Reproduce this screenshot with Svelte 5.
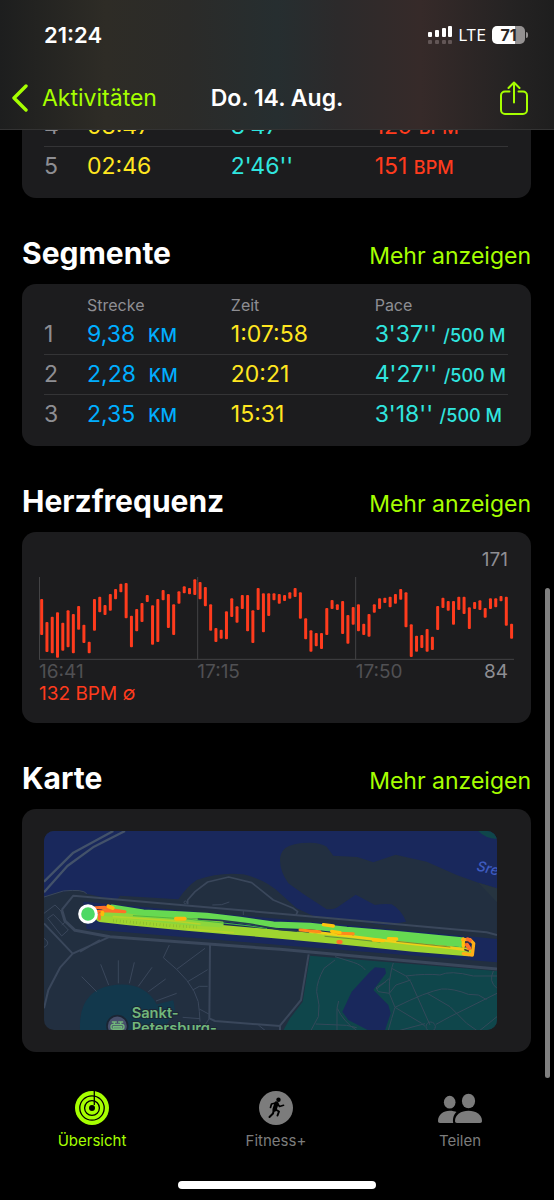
<script>
    const splits = [
        { nr: 4, time: '03:47', pace: "3'47''", bpm: 129 },
        { nr: 5, time: '02:46', pace: "2'46''", bpm: 151 }
    ];

    const segments = [
        { nr: 1, distance: '9,38', time: '1:07:58', pace: "3'37''" },
        { nr: 2, distance: '2,28', time: '20:21', pace: "4'27''" },
        { nr: 3, distance: '2,35', time: '15:31', pace: "3'18''" }
    ];

    // top and bottom of every bar, in chart units
    const heartRate = [
        [207, 315], [276, 366], [260, 370], [247, 383], [278, 362], [241, 352],
        [252, 370], [228, 299], [284, 339], [335, 370], [207, 302], [200, 247],
        [225, 255], [192, 242], [177, 208], [161, 187], [159, 265], [257, 352],
        [237, 304], [219, 276], [195, 216], [226, 344], [207, 336], [180, 211],
        [192, 294], [223, 315], [184, 221], [169, 190], [174, 193], [148, 195],
        [156, 208], [171, 229], [223, 302], [294, 336], [299, 326], [244, 328],
        [205, 261], [229, 278], [195, 237], [195, 304], [241, 339], [174, 240],
        [190, 307], [190, 258], [190, 211], [192, 221], [195, 213], [187, 206],
        [174, 201], [187, 266], [265, 328], [301, 365], [309, 349], [309, 357],
        [234, 315], [210, 237], [223, 240], [213, 312], [255, 341], [231, 284],
        [223, 304], [281, 315], [252, 320], [223, 248], [205, 237], [203, 219],
        [200, 232], [192, 221], [177, 209], [187, 292], [283, 381], [317, 365],
        [315, 354], [297, 365], [320, 360], [228, 300], [203, 234], [213, 242],
        [213, 284], [200, 240], [200, 252], [232, 297], [216, 237], [211, 240],
        [234, 263], [205, 237], [205, 232], [198, 214], [200, 287], [281, 326]
    ];
</script>

<div class="app">
    <header>
        <div class="status">
            <span class="clock">21:24</span>
            <div class="status-right">
                <svg class="signal" viewBox="0 0 25 18" aria-hidden="true">
                    <g fill="#fff">
                        <rect x="0" y="6" width="4" height="5" rx="1" />
                        <rect x="7" y="4" width="4" height="7" rx="1" />
                        <rect x="14" y="2" width="4" height="9" rx="1" />
                        <rect x="20" y="0" width="4" height="11" rx="1" />
                    </g>
                    <g fill="#625656">
                        <rect x="0" y="14" width="4" height="4" rx="1" />
                        <rect x="7" y="14" width="4" height="4" rx="1" />
                        <rect x="14" y="14" width="4" height="4" rx="1" />
                        <rect x="20" y="14" width="4" height="4" rx="1" />
                    </g>
                </svg>
                <span class="network">LTE</span>
                <div class="battery"><span>71</span></div>
            </div>
        </div>
        <nav class="navbar">
            <button class="back">
                <svg viewBox="0 0 16 28" aria-hidden="true">
                    <path d="M14 2 2 14l12 12" fill="none" stroke="currentColor" stroke-width="3.4" stroke-linecap="round" stroke-linejoin="round" />
                </svg>
                Aktivitäten
            </button>
            <h1>Do. 14. Aug.</h1>
            <button class="share" aria-label="Teilen">
                <svg viewBox="0 0 28 35" aria-hidden="true">
                    <path d="M9.500 10.500H5a4 4 0 0 0-4 4V29a4 4 0 0 0 4 4h18a4 4 0 0 0 4-4V14.500a4 4 0 0 0-4-4h-4.500M14 21.500V1.500M8.500 7 14 1.500 19.500 7" fill="none" stroke="currentColor" stroke-width="2" stroke-linecap="round" stroke-linejoin="round" />
                </svg>
            </button>
        </nav>
    </header>

    <main>
        <div class="card table-card splits">
            <table>
                <tbody>
                    {#each splits as split}
                        <tr>
                            <td class="nr">{split.nr}</td>
                            <td class="yellow">{split.time}</td>
                            <td class="cyan">{split.pace}</td>
                            <td class="red">{split.bpm} <small>BPM</small></td>
                        </tr>
                    {/each}
                </tbody>
            </table>
        </div>

        <div class="section-head">
            <h2>Segmente</h2>
            <a href="#segmente">Mehr anzeigen</a>
        </div>
        <div class="card table-card" id="segmente">
            <table>
                <thead>
                    <tr>
                        <th class="nr"></th>
                        <th>Strecke</th>
                        <th>Zeit</th>
                        <th>Pace</th>
                    </tr>
                </thead>
                <tbody>
                    {#each segments as segment}
                        <tr>
                            <td class="nr">{segment.nr}</td>
                            <td class="blue">{segment.distance}&nbsp; <small>KM</small></td>
                            <td class="yellow">{segment.time}</td>
                            <td class="cyan">{segment.pace} <small>/500 M</small></td>
                        </tr>
                    {/each}
                </tbody>
            </table>
        </div>

        <div class="section-head">
            <h2>Herzfrequenz</h2>
            <a href="#herzfrequenz">Mehr anzeigen</a>
        </div>
        <div class="card heart" id="herzfrequenz">
            <div class="max">171</div>
            <svg class="chart" viewBox="0 141 1425 249" aria-hidden="true">
                <g stroke="#434345" stroke-width="3">
                    <path d="M1.500 141v247M476 141v247M950 141v247M0 388h1425" />
                </g>
                {#each heartRate as [top, bottom], i}
                    <rect x={3.500 + i * 15.84} y={top} width="9" height={bottom - top} rx="3" fill="#ff3b1d" />
                {/each}
            </svg>
            <div class="axis">
                <span>16:41</span>
                <span>17:15</span>
                <span class="last">17:50 <span class="min">84</span></span>
            </div>
            <div class="average">132 BPM ∅</div>
        </div>

        <div class="section-head">
            <h2>Karte</h2>
            <a href="#karte">Mehr anzeigen</a>
        </div>
        <div class="card map-card" id="karte">
            <svg class="map" viewBox="72 78 1359 598" role="img" aria-label="Karte">
                <rect x="72" y="78" width="1359" height="598" fill="#222f40" />

                <!-- river and island -->
                <path d="M72 78H1431V250L1375 233 1310 210 1220 170 1127 149 1060 172 1012 156 940 152 920 125Q900 113 870 113 815 113 795 130 780 145 780 165 780 200 805 235L850 267 920 313Q940 313 950 308L1007 269 1065 300Q1090 295 1115 298 1145 315 1158 350L1100 360 880 333 830 310 780 265Q740 225 670 208 600 200 530 225 500 245 475 283L300 272 290 286 200 266Q190 256 170 256 110 258 72 276Z" fill="#19285c" />
                <path d="M1375 78H1431V102Q1395 100 1375 78Z" fill="#0f464b" />
                <path d="M190 290 780 342 1431 402V472L780 420 200 372Z" fill="#19285c" />
                <path d="M1375 233 1431 250V292Z" fill="#263440" />

                <!-- parks -->
                <path d="M870 452 1431 498V676H790L810 640 848 590Z" fill="#0f464b" />
                <path d="M1065 487 1095 490 1098 505 1060 555 1105 600 1112 625 1095 676H1045L985 645 967 620 995 560 1050 500Z" fill="#19285c" />
                <path d="M180 676Q175 560 270 542 370 525 410 598L460 586 465 615 430 676Z" fill="#12384c" />

                <!-- main streets -->
                <g fill="none" stroke="#3a475b" stroke-linejoin="round">
                    <path d="M72 230 160 143 280 78M72 262 142 183 222 125 315 78" stroke="#43526a" stroke-width="7" />
                    <path d="M72 276 130 258Q190 252 200 266" stroke-width="3" />
                    <path d="M125 315 160 272 300 284 780 326 1400 382 1431 390" stroke-width="6" />
                    <path d="M125 315 135 348 165 376 270 395 780 433 1431 492" stroke-width="9" />
                    <path d="M270 395 158 446 72 355M158 446 120 488 85 555 72 610M180 440 240 405" stroke-width="6" />
                    <path d="M503 298V285L525 260 563 231 626 216 695 233 760 285 820 310 833 320 827 332" stroke-width="5" />
                    <path d="M570 420 568 640 585 648 780 663M866 448 843 585 780 662V676" stroke-width="6" />
                    <path d="M430 458 470 493Q540 560 538 620L540 650M448 420 430 458M470 493 555 430M503 530 563 494M518 555 538 544H563M538 612 568 628M568 640 545 676M488 637 540 641M715 660 735 676" stroke-width="3" />
                    <path d="M185 515 230 560M242 478 266 540M295 466V535M343 472 328 535M396 487 355 544M437 522 385 560M470 565 408 588M577 300 605 299 628 291M670 318V330" stroke-width="3" />
                    <path d="M72 325 105 300 125 320M83 340 100 328 145 375 125 393 83 340M125 360 137 350 148 365M72 400Q95 415 72 427" stroke-width="3" />
                    <circle cx="496" cy="292" r="4" stroke-width="3" />
                </g>

                <!-- paths in the park -->
                <g fill="none" stroke="#34495a" stroke-width="3" stroke-linejoin="round">
                    <path d="M945 465 912 490Q890 530 890 560L897 600 895 635 873 676M945 455 1000 472Q1025 480 1036 495M887 657 980 661 1010 668M956 588 951 610V676M952 610Q970 650 1010 676" />
                    <path d="M1120 474 1115 490 1158 513 1172 530 1230 660M1158 513Q1220 505 1260 510 1290 495 1360 513H1431M1115 490Q1105 530 1108 565L1125 607Q1115 640 1105 676M1108 520 1070 552M1172 525 1128 540 1108 565 1075 560 1068 548 1098 530" />
                    <path d="M1125 607Q1220 560 1265 552 1300 550 1345 568L1375 570 1400 584M1222 565 1290 605 1340 655 1370 676M1125 607 1205 655 1215 664M1140 676 1215 656M1248 658 1290 635 1431 565M1380 676 1431 635M1420 498Q1405 530 1431 550" />
                    <circle cx="1232" cy="665" r="14" />
                </g>

                <!-- recorded route, coloured by pace -->
                <g fill="none" stroke-linecap="round" stroke-linejoin="round">
                    <path d="M240 338 320 347 500 364 640 376 780 388 950 404 1180 427 1345 441" stroke="#9fd52f" stroke-width="26" />
                    <path d="M255 322 370 335 500 350 600 356" stroke="#8bd63d" stroke-width="22" />
                    <path d="M275 308 370 323 480 328 560 333 660 345 760 359 870 363 980 375 1140 388 1325 406" stroke="#66d951" stroke-width="19" />
                    <path d="M1010 388 1150 402 1320 416" stroke="#66d951" stroke-width="20" />
                    <path d="M870 380 1000 395 1180 417 1290 428 1348 436" stroke="#f0cf18" stroke-width="8" />
                    <path d="M280 335 450 347 540 357M500 372 640 383" stroke="#b7d42b" stroke-width="5" />
                    <path d="M340 332 500 342 690 363 740 370" stroke="#47b747" stroke-width="3" />
                    <path d="M535 342 600 346 690 357 780 374 830 378" stroke="#253a51" stroke-width="5" />
                    <path d="M915 394 990 401 1080 411M1130 409 1290 426" stroke="#496f39" stroke-width="2" />
                    <path d="M226 308 255 307 285 316 315 320 250 317 228 320" stroke="#ff7028" stroke-width="9" />
                    <path d="M238 342V328" stroke="#ff7028" stroke-width="9" />
                    <path d="M265 304 278 309M247 323V328M468 341 494 341" stroke="#ffb80c" stroke-width="12" />
                    <path d="M840 375 900 380M955 385 1000 386" stroke="#ff8a1b" stroke-width="9" />
                    <path d="M910 359 940 363M935 379 960 383M1105 401 1130 402M1060 405 1090 407M1330 402V424" stroke="#ffc40c" stroke-width="10" />
                    <path d="M1328 404 1350 404 1361 415 1357 450 1330 446" stroke="#ffae16" stroke-width="10" />
                    <path d="M955 411 962 411M1343 403 1350 406M1340 418 1348 430" stroke="#ff702b" stroke-width="12" />
                    <path d="M1337 412 1344 411M1335 434 1345 438" stroke="#3a3340" stroke-width="5" />
                    <path d="M280 347 440 361 530 366" stroke="#759c2f" stroke-width="9" stroke-dasharray="1 9" stroke-linecap="butt" />
                </g>
                <circle cx="204" cy="327" r="25" fill="#4cd964" stroke="#fff" stroke-width="9" />

                <g>
                    <circle cx="292" cy="663" r="31" fill="#474f6b" stroke="#1b2534" stroke-width="5" />
                    <g fill="none" stroke="#72b77b" stroke-width="4" stroke-linecap="round">
                        <path d="M277 651H289M296 651H308M283 651V657M302 651V657" />
                        <rect x="273" y="658" width="39" height="15" rx="7" />
                        <path d="M280 664H305V669H280Z" />
                    </g>
                </g>
                <g class="place">
                    <text x="335" y="638">Sankt-</text>
                    <text x="335" y="683">Petersburg-</text>
                </g>
                <text class="river" transform="translate(1368 196) rotate(14)">Sre</text>
            </svg>
        </div>
    </main>

    <footer>
        <nav class="tabs">
            <button class="tab active">
                <svg viewBox="0 0 34 34" aria-hidden="true">
                    <circle cx="17" cy="17" r="17" fill="#a6ff00" />
                    <g fill="none" stroke="#000" stroke-width="1.300">
                        <circle cx="17" cy="17" r="12.200" />
                        <circle cx="17" cy="17" r="7.400" />
                    </g>
                    <circle cx="17" cy="17" r="3" fill="#000" />
                    <path d="M19.300 0v14" stroke="#000" stroke-width="1.300" />
                </svg>
                Übersicht
            </button>
            <button class="tab">
                <svg viewBox="0 0 34 34" aria-hidden="true">
                    <circle cx="17" cy="17" r="17" fill="#7c7c7c" />
                    <circle cx="19.500" cy="8.700" r="2.200" fill="#000" />
                    <g fill="none" stroke="#000" stroke-linecap="round" stroke-linejoin="round">
                        <path d="M17.500 12.500 15.500 18.500" stroke-width="4.200" />
                        <path d="M16.500 12 12.500 13 11.500 16.500M18.500 12.500 20.500 15.500 24.500 14.300" stroke-width="1.700" />
                        <path d="M16.500 18.500 20 20.500 18.500 24.500M14.800 19 14 22.500 10.500 26" stroke-width="2" />
                    </g>
                </svg>
                Fitness+
            </button>
            <button class="tab">
                <svg class="people" viewBox="0 0 44 34" aria-hidden="true">
                    <g fill="#7c7c7c">
                        <ellipse cx="11.700" cy="11.200" rx="5.800" ry="6.400" />
                        <path d="M0 30C0 23.500 5.500 19.700 11.500 19.700 14.500 19.700 17 20.300 18.500 21 15.500 23.500 14.500 28 15.200 32H2C.7 32 0 31.300 0 30Z" />
                        <ellipse cx="30.500" cy="10" rx="6.600" ry="7.300" />
                        <path d="M17 30C17 23.500 23 19.700 30.500 19.700S44 23.500 44 30C44 31.300 43.300 32 42 32H19C17.700 32 17 31.300 17 30Z" />
                    </g>
                </svg>
                Teilen
            </button>
        </nav>
        <div class="home-indicator"></div>
    </footer>

    <div class="scrollbar"></div>
</div>

<style>
    :global(body) {
        background-color: #000;
    }

    .app {
        display: flex;
        flex-direction: column;
        min-height: 100vh;
        background-color: #000;
        color: white;
        font-family: Inter, 'Liberation Sans', sans-serif;
    }

    button {
        padding: 0;
        border: none;
        background: none;
        color: #a6ff00;
        font-family: inherit;
        cursor: pointer;
    }

    h1,
    h2 {
        margin: 0;
    }

    svg {
        display: block;
    }

    header {
        position: sticky;
        top: 0;
        z-index: 10;
        box-sizing: border-box;
        height: 130px;
        border-bottom: 1px solid #333333;
        background: linear-gradient(to right, #1d1e1e 0%, #2e2c26 19%, #2b2b29 34%, #262e30 50%, #2c2a2b 61%, #362a29 76%, #252323 92%, #1e1e1e 100%);
    }

    .status {
        display: flex;
        justify-content: space-between;
        align-items: center;
        height: 70px;
        padding: 0 26px 0 44px;
    }

    .clock {
        font-size: 22px;
        font-weight: 600;
    }

    .status-right {
        display: flex;
        align-items: center;
        gap: 6px;
    }

    .signal {
        width: 25px;
        height: 18px;
    }

    .network {
        font-size: 16px;
        font-weight: 400;
    }

    .battery {
        position: relative;
        width: 33px;
        height: 18px;
        margin-right: 3px;
        border-radius: 5px;
        background: linear-gradient(to right, #fff 70%, #959292 70%);
        color: #2b2727;
        font-size: 16px;
        font-weight: 700;
        line-height: 18px;
        text-align: center;
    }

    .battery::after {
        content: '';
        position: absolute;
        top: 6px;
        right: -3px;
        width: 2px;
        height: 6px;
        border-radius: 0 2px 2px 0;
        background-color: #959292;
    }

    .navbar {
        display: grid;
        grid-template-columns: 1fr auto 1fr;
        align-items: center;
        height: 56px;
        padding: 0 26px 0 12px;
    }

    .back {
        display: flex;
        align-items: center;
        gap: 14px;
        font-size: 23px;
    }

    .back svg {
        width: 16px;
        height: 28px;
    }

    h1 {
        margin-left: 14px;
        font-size: 23px;
        font-weight: 600;
        white-space: nowrap;
    }

    .share {
        justify-self: end;
    }

    .share svg {
        width: 28px;
        height: 35px;
    }

    main {
        padding: 0 23px 0 22px;
    }

    .card {
        border-radius: 14px;
        background-color: #1c1c1e;
    }

    .table-card {
        padding: 11px 23px 11px 22px;
    }

    /* scrolled halfway under the header */
    .splits {
        margin-top: -34px;
    }

    table {
        width: 100%;
        border-collapse: separate;
        border-spacing: 0;
        table-layout: fixed;
    }

    th {
        height: 20px;
        padding: 0;
        color: #8e8e93;
        font-size: 16px;
        font-weight: 400;
        line-height: 20px;
        text-align: left;
    }

    td {
        box-sizing: border-box;
        height: 40px;
        padding: 0;
        border-bottom: 1px solid #343436;
        font-size: 23px;
        line-height: 39px;
        white-space: nowrap;
    }

    tr:last-child td {
        border-bottom-color: transparent;
    }

    td small {
        font-size: 18px;
        font-weight: 500;
        line-height: 1;
    }

    .nr {
        width: 43px;
        color: #8e8e93;
    }

    .yellow {
        color: #ffe620;
    }

    .cyan {
        color: #30e5df;
    }

    .blue {
        color: #00aeff;
    }

    .red {
        color: #ff3b1d;
    }

    th:nth-child(2),
    th:nth-child(3),
    td:nth-child(2),
    td:nth-child(3) {
        width: 31%;
    }

    .section-head {
        display: flex;
        justify-content: space-between;
        align-items: baseline;
        height: 50px;
        padding-top: 36px;
    }

    h2 {
        font-size: 30px;
        font-weight: 700;
        line-height: 38px;
    }

    a {
        color: #a6ff00;
        font-size: 23px;
        text-decoration: none;
    }

    .heart {
        box-sizing: border-box;
        height: 191px;
        padding: 17px 17px 0;
        font-size: 19px;
        line-height: 22px;
    }

    .max {
        height: 28px;
        padding-right: 6px;
        color: #8e8e93;
        text-align: right;
    }

    .chart {
        width: 100%;
    }

    .axis {
        display: grid;
        grid-template-columns: 1fr 1fr 1fr;
        padding-top: 1px;
        color: #505053;
    }

    .last {
        display: flex;
        justify-content: space-between;
        padding-right: 6px;
    }

    .min {
        color: #8e8e93;
    }

    .average {
        color: #ff3b1d;
    }

    .map-card {
        padding: 22px 34px 22px 22px;
    }

    .map {
        width: 100%;
        border-radius: 10px;
    }

    .place {
        fill: #72b77b;
        stroke: #1b2534;
        stroke-width: 6px;
        paint-order: stroke;
        font-size: 44px;
        font-weight: 600;
    }

    .river {
        fill: #3f5cc0;
        font-size: 42px;
        font-style: italic;
        font-weight: 500;
    }

    footer {
        margin-top: auto;
        padding-bottom: 11px;
    }

    .tabs {
        display: grid;
        grid-template-columns: 1fr 1fr 1fr;
        padding: 0 2px 30px 0;
    }

    .tab {
        display: flex;
        flex-direction: column;
        align-items: center;
        gap: 6px;
        color: #7c7c7c;
        font-size: 15px;
        line-height: 20px;
    }

    .tab.active {
        color: #a6ff00;
    }

    .tab svg {
        width: 34px;
        height: 34px;
    }

    .tab .people {
        width: 44px;
    }

    .home-indicator {
        width: 198px;
        height: 8px;
        margin: 0 auto;
        border-radius: 4px;
        background-color: white;
    }

    .scrollbar {
        position: fixed;
        top: 49%;
        right: 4px;
        width: 5px;
        height: 490px;
        border-radius: 3px;
        background-color: #808080;
    }
</style>
